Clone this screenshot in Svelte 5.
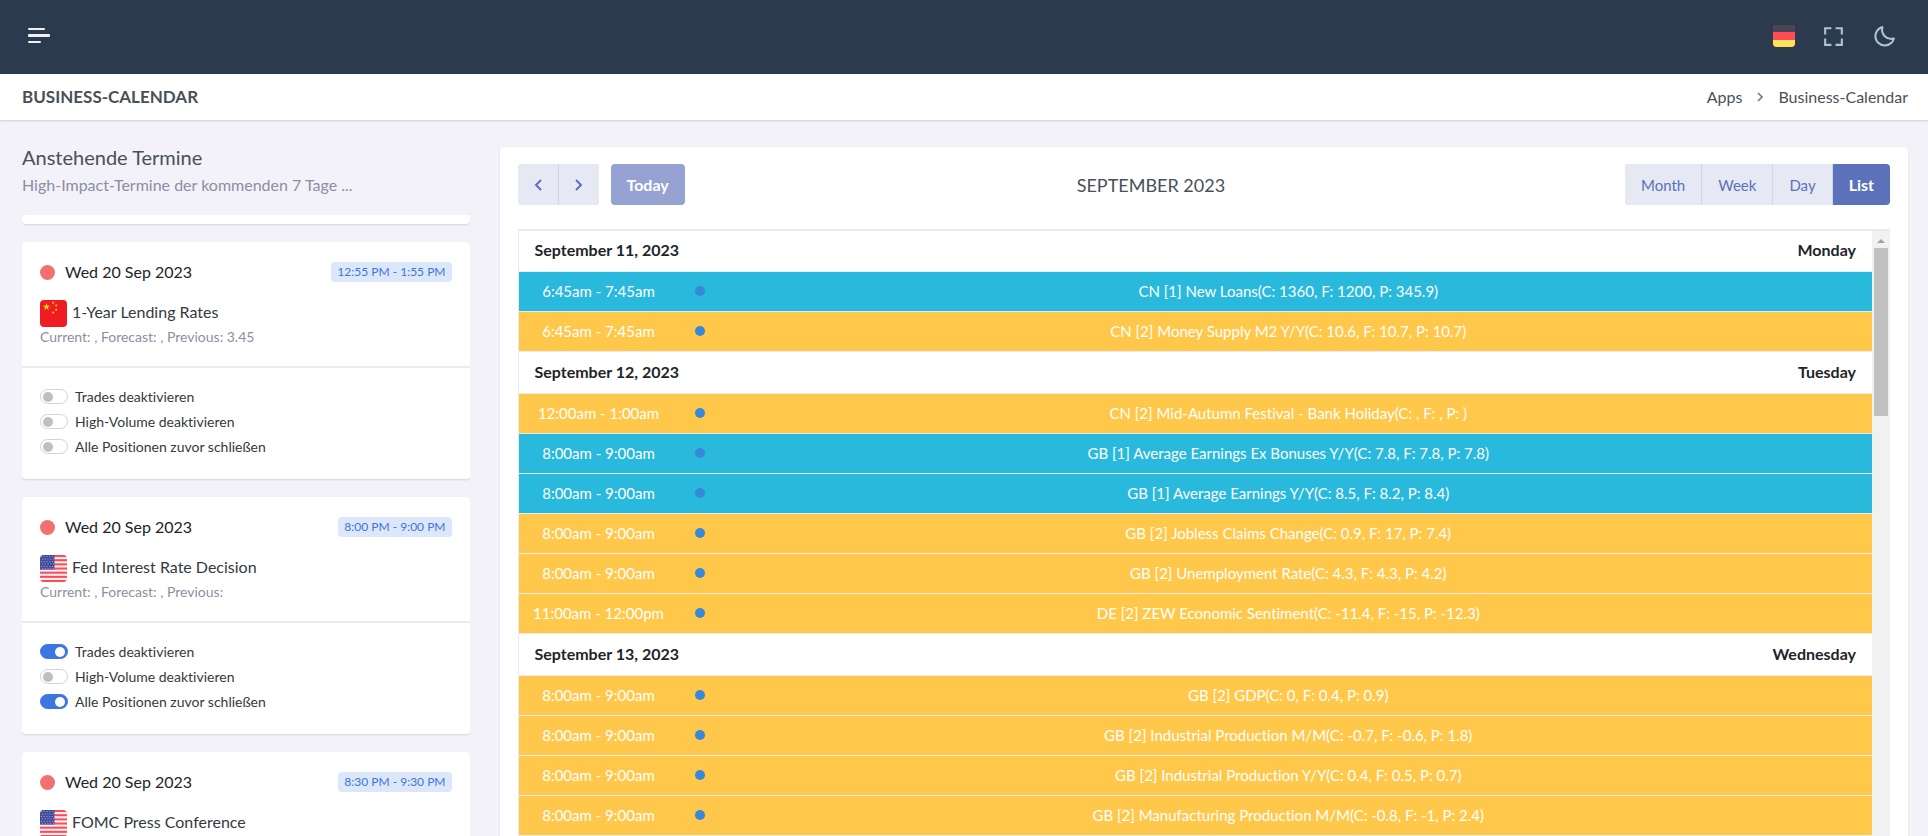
<script lang="ts">
	interface Option {
		label: string;
		checked: boolean;
	}

	interface Appointment {
		date: string;
		time: string;
		country: 'cn' | 'us';
		title: string;
		values: string;
		options: Option[];
	}

	function options(trades: boolean, volume: boolean, positions: boolean): Option[] {
		return [
			{ label: 'Trades deaktivieren', checked: trades },
			{ label: 'High-Volume deaktivieren', checked: volume },
			{ label: 'Alle Positionen zuvor schließen', checked: positions },
		];
	}

	let appointments: Appointment[] = $state([
		{
			date: 'Wed 20 Sep 2023',
			time: '12:55 PM - 1:55 PM',
			country: 'cn',
			title: '1-Year Lending Rates',
			values: 'Current: , Forecast: , Previous: 3.45',
			options: options(false, false, false),
		},
		{
			date: 'Wed 20 Sep 2023',
			time: '8:00 PM - 9:00 PM',
			country: 'us',
			title: 'Fed Interest Rate Decision',
			values: 'Current: , Forecast: , Previous:',
			options: options(true, false, true),
		},
		{
			date: 'Wed 20 Sep 2023',
			time: '8:30 PM - 9:30 PM',
			country: 'us',
			title: 'FOMC Press Conference',
			values: 'Current: , Forecast: , Previous:',
			options: options(true, false, true),
		},
	]);

	const days = [
		{
			date: 'September 11, 2023',
			weekday: 'Monday',
			events: [
				{ time: '6:45am - 7:45am', impact: 1, title: 'CN [1] New Loans(C: 1360, F: 1200, P: 345.9)' },
				{ time: '6:45am - 7:45am', impact: 2, title: 'CN [2] Money Supply M2 Y/Y(C: 10.6, F: 10.7, P: 10.7)' },
			],
		},
		{
			date: 'September 12, 2023',
			weekday: 'Tuesday',
			events: [
				{ time: '12:00am - 1:00am', impact: 2, title: 'CN [2] Mid-Autumn Festival - Bank Holiday(C: , F: , P: )' },
				{ time: '8:00am - 9:00am', impact: 1, title: 'GB [1] Average Earnings Ex Bonuses Y/Y(C: 7.8, F: 7.8, P: 7.8)' },
				{ time: '8:00am - 9:00am', impact: 1, title: 'GB [1] Average Earnings Y/Y(C: 8.5, F: 8.2, P: 8.4)' },
				{ time: '8:00am - 9:00am', impact: 2, title: 'GB [2] Jobless Claims Change(C: 0.9, F: 17, P: 7.4)' },
				{ time: '8:00am - 9:00am', impact: 2, title: 'GB [2] Unemployment Rate(C: 4.3, F: 4.3, P: 4.2)' },
				{ time: '11:00am - 12:00pm', impact: 2, title: 'DE [2] ZEW Economic Sentiment(C: -11.4, F: -15, P: -12.3)' },
			],
		},
		{
			date: 'September 13, 2023',
			weekday: 'Wednesday',
			events: [
				{ time: '8:00am - 9:00am', impact: 2, title: 'GB [2] GDP(C: 0, F: 0.4, P: 0.9)' },
				{ time: '8:00am - 9:00am', impact: 2, title: 'GB [2] Industrial Production M/M(C: -0.7, F: -0.6, P: 1.8)' },
				{ time: '8:00am - 9:00am', impact: 2, title: 'GB [2] Industrial Production Y/Y(C: 0.4, F: 0.5, P: 0.7)' },
				{ time: '8:00am - 9:00am', impact: 2, title: 'GB [2] Manufacturing Production M/M(C: -0.8, F: -1, P: 2.4)' },
			],
		},
	];

	const views = ['Month', 'Week', 'Day', 'List'];
	let view = $state('List');
</script>

{#snippet flag(country: string)}
	<svg class="flag" viewBox="0 0 27 27" aria-hidden="true">
		{#if country === 'cn'}
			<rect width="27" height="27" fill="#f01c24" />
			<path d="M6.5 3.2l.9 2.5h2.7L7.9 7.3l.8 2.6-2.2-1.6-2.2 1.6.8-2.6-2.2-1.6h2.7z" fill="#ffe600" />
			<g fill="#ffd500">
				<circle cx="13.2" cy="2.8" r="1" />
				<circle cx="16.2" cy="5.5" r="1" />
				<circle cx="16.2" cy="9.8" r="1" />
				<circle cx="13.2" cy="12.6" r="1" />
			</g>
		{:else}
			<rect width="27" height="27" fill="#f8f4f8" />
			{#each [0, 1, 2, 3, 4, 5, 6] as stripe}
				<rect y={stripe * 4.16} width="27" height="2.08" fill="#ff4b55" />
			{/each}
			<rect width="14.5" height="14.5" fill="#414b9e" />
			{#each [1.6, 4, 6.4, 8.8, 11.2, 13.2] as y, row}
				{#each [1.4, 4.2, 7, 9.8, 12.6] as x}
					<circle cx={row % 2 ? x + 1 : x} cy={y} r="0.5" fill="#c9cbe6" />
				{/each}
			{/each}
		{/if}
	</svg>
{/snippet}

<div class="page">
	<header class="topbar">
		<button type="button" class="icon-button" aria-label="Menu">
			<svg width="22" height="16" viewBox="0 0 22 16" fill="#f0f1f4">
				<rect width="17" height="2" rx="1" />
				<rect y="6" width="22" height="3" rx="1" />
				<rect y="13" width="13" height="2" rx="1" />
			</svg>
		</button>
		<div class="topbar-actions">
			<button type="button" class="icon-button" aria-label="Deutsch">
				<svg class="language" width="22" height="22" viewBox="0 0 22 22">
					<rect width="22" height="22" fill="#ff4b55" />
					<rect width="22" height="7" fill="#464655" />
					<rect y="15" width="22" height="7" fill="#ffe15a" />
				</svg>
			</button>
			<button type="button" class="icon-button" aria-label="Fullscreen">
				<svg width="25" height="25" viewBox="0 0 24 24" fill="#adc4dc">
					<path d="M5 5h5V3H3v7h2zm5 14H5v-5H3v7h7zm11-5h-2v5h-5v2h7zm-2-4h2V3h-7v2h5z" />
				</svg>
			</button>
			<button type="button" class="icon-button" aria-label="Dark mode">
				<svg width="25" height="25" viewBox="0 0 24 24" fill="#adc4dc">
					<path d="M20.742 13.045a8.088 8.088 0 0 1-2.077.271c-2.135 0-4.14-.83-5.646-2.336a8.025 8.025 0 0 1-2.064-7.723A1 1 0 0 0 9.73 2.034a10.014 10.014 0 0 0-4.489 2.582c-3.898 3.898-3.898 10.243 0 14.143a9.937 9.937 0 0 0 7.072 2.93 9.93 9.93 0 0 0 7.07-2.929 10.007 10.007 0 0 0 2.583-4.491 1.001 1.001 0 0 0-1.224-1.224zm-2.772 4.301a7.947 7.947 0 0 1-5.656 2.343 7.953 7.953 0 0 1-5.658-2.344c-3.118-3.119-3.118-8.195 0-11.314a7.923 7.923 0 0 1 2.06-1.483 10.027 10.027 0 0 0 2.89 7.848 9.972 9.972 0 0 0 7.848 2.891 8.036 8.036 0 0 1-1.484 2.059z" />
				</svg>
			</button>
		</div>
	</header>

	<div class="title-bar">
		<h1>Business-Calendar</h1>
		<nav class="breadcrumb" aria-label="Breadcrumb">
			<a href="#apps">Apps</a>
			<svg width="6" height="10" viewBox="0 0 6 10" fill="none" stroke="#74788d" stroke-width="1.6">
				<path d="M1 1l4 4-4 4" />
			</svg>
			<span>Business-Calendar</span>
		</nav>
	</div>

	<main class="content">
		<aside class="upcoming">
			<h2>Anstehende Termine</h2>
			<p class="subtitle">High-Impact-Termine der kommenden 7 Tage ...</p>
			<div class="card-scroll">
				<div class="card card-tail"></div>
				{#each appointments as appointment}
					<article class="card">
						<div class="card-body">
							<div class="card-head">
								<span class="impact-dot"></span>
								<span class="date">{appointment.date}</span>
								<span class="badge">{appointment.time}</span>
							</div>
							<h3>{@render flag(appointment.country)}{appointment.title}</h3>
							<p class="values">{appointment.values}</p>
						</div>
						<div class="card-options">
							{#each appointment.options as option}
								<label>
									<input type="checkbox" role="switch" bind:checked={option.checked} />
									{option.label}
								</label>
							{/each}
						</div>
					</article>
				{/each}
			</div>
		</aside>

		<section class="calendar">
			<div class="toolbar">
				<div class="toolbar-start">
					<div class="button-group">
						<button type="button" class="arrow" aria-label="Previous">
							<svg width="8" height="12" viewBox="0 0 8 12"><path d="M7 1L2 6l5 5" /></svg>
						</button>
						<button type="button" class="arrow" aria-label="Next">
							<svg width="8" height="12" viewBox="0 0 8 12"><path d="M1 1l5 5-5 5" /></svg>
						</button>
					</div>
					<button type="button" class="today" disabled>Today</button>
				</div>
				<h2>September 2023</h2>
				<div class="button-group">
					{#each views as name}
						<button type="button" class:active={view === name} onclick={() => (view = name)}>{name}</button>
					{/each}
				</div>
			</div>

			<div class="list">
				<table>
					<colgroup>
						<col class="col-time" />
						<col class="col-dot" />
						<col />
					</colgroup>
					{#each days as day}
						<tbody>
							<tr class="day">
								<th colspan="3">
									<div>
										<span>{day.date}</span>
										<span>{day.weekday}</span>
									</div>
								</th>
							</tr>
							{#each day.events as event}
								<tr class="event" class:low={event.impact === 1}>
									<td>{event.time}</td>
									<td class="dot-cell"><span class="dot"></span></td>
									<td>{event.title}</td>
								</tr>
							{/each}
						</tbody>
					{/each}
				</table>
				<div class="scrollbar" aria-hidden="true">
					<svg width="8" height="4" viewBox="0 0 8 4"><path d="M0 4l4-4 4 4z" fill="#a3a3a3" /></svg>
					<div class="thumb"></div>
				</div>
			</div>
		</section>
	</main>
</div>

<style>
	:global(body) {
		margin: 0;
	}

	.page {
		display: flex;
		flex-direction: column;
		height: 100vh;
		overflow: hidden;
		background: #f3f2f8;
		color: #495057;
		font-family: Lato, 'Open Sans', sans-serif;
		font-size: 15px;
		font-variant-ligatures: none;
		line-height: 24px;
	}

	.page * {
		box-sizing: border-box;
	}

	h1,
	h2,
	h3,
	p {
		margin: 0;
		font-weight: 400;
	}

	button {
		border: 0;
		padding: 0;
		font: inherit;
		cursor: pointer;
	}

	.topbar {
		display: flex;
		flex: none;
		align-items: center;
		justify-content: space-between;
		height: 74px;
		padding: 0 31px 2px 28px;
		background: #2c3a4d;
	}

	.topbar-actions {
		display: flex;
		align-items: center;
		gap: 26px;
	}

	.icon-button {
		display: flex;
		align-items: center;
		justify-content: center;
		background: none;
	}

	.language,
	.flag {
		border-radius: 4px;
	}

	.title-bar {
		display: flex;
		flex: none;
		align-items: center;
		justify-content: space-between;
		height: 46px;
		padding: 0 20px 0 22px;
		background: #fff;
		box-shadow: 0 1px 2px rgba(50, 50, 93, 0.2);
	}

	.title-bar h1 {
		font-size: 17px;
		font-weight: 700;
		text-transform: uppercase;
	}

	.breadcrumb {
		display: flex;
		align-items: center;
		gap: 15px;
		font-size: 16px;
	}

	.breadcrumb a {
		color: inherit;
		text-decoration: none;
	}

	.content {
		display: grid;
		flex: 1;
		grid-template-columns: calc(25% - 24px) minmax(0, 1fr);
		gap: 30px;
		min-height: 0;
		padding: 27px 20px 0 22px;
	}

	.upcoming {
		display: flex;
		flex-direction: column;
		min-height: 0;
	}

	.upcoming h2 {
		margin-bottom: 6px;
		font-size: 20px;
		line-height: 20px;
	}

	.subtitle {
		margin-bottom: 18px;
		color: #8a8fa3;
		font-size: 16px;
	}

	.card-scroll {
		display: flex;
		flex: 1;
		flex-direction: column;
		gap: 18px;
		min-height: 0;
		overflow: hidden;
	}

	.card {
		flex: none;
		border-radius: 4px;
		background: #fff;
		box-shadow: 0 1px 2px rgba(50, 50, 93, 0.15);
	}

	.card-tail {
		height: 9px;
		border-top-left-radius: 0;
		border-top-right-radius: 0;
	}

	.card-body {
		padding: 18px 18px 19px;
		border-bottom: 2px solid #ebebed;
	}

	.card-head {
		display: flex;
		align-items: center;
		margin-bottom: 16px;
	}

	.impact-dot {
		width: 15px;
		height: 15px;
		margin-right: 10px;
		border-radius: 50%;
		background: #f17171;
	}

	.date {
		color: #212529;
		font-size: 16px;
	}

	.badge {
		margin-left: auto;
		padding: 0 6px;
		border-radius: 4px;
		background: #dce7fa;
		color: #3b76e1;
		font-size: 12px;
		line-height: 20px;
	}

	.card h3 {
		display: flex;
		align-items: flex-start;
		gap: 5px;
		color: #343a40;
		font-size: 16px;
	}

	.flag {
		width: 27px;
		height: 27px;
	}

	.values {
		color: #8a8fa3;
		font-size: 14px;
		line-height: 20px;
	}

	.card-options {
		padding: 16px 18px 20px;
	}

	.card-options label {
		display: flex;
		align-items: center;
		gap: 7px;
		height: 25px;
		color: #343a40;
		font-size: 14px;
	}

	.card-options input {
		display: flex;
		align-items: center;
		appearance: none;
		width: 28px;
		height: 15px;
		margin: 0;
		border: 1px solid #ced4da;
		border-radius: 8px;
		padding: 0 2px;
		background: #fff;
	}

	.card-options input::before {
		content: '';
		width: 10px;
		height: 10px;
		border-radius: 50%;
		background: #bfbfbf;
	}

	.card-options input:checked {
		justify-content: flex-end;
		border-color: #3b76e1;
		background: #3b76e1;
	}

	.card-options input:checked::before {
		background: #fff;
	}

	.calendar {
		min-height: 0;
		padding: 17px 18px 0;
		border-radius: 4px 4px 0 0;
		background: #fff;
		box-shadow: 0 1px 2px rgba(50, 50, 93, 0.15);
	}

	.toolbar {
		display: flex;
		align-items: center;
		justify-content: space-between;
		margin-bottom: 24px;
	}

	.toolbar h2 {
		margin-right: 8px;
		font-size: 18px;
		text-transform: uppercase;
	}

	.toolbar-start {
		display: flex;
		gap: 12px;
	}

	.button-group {
		display: flex;
		gap: 1px;
		overflow: hidden;
		border-radius: 4px;
		background: #d0d5ea;
	}

	.toolbar button {
		height: 41px;
		padding: 0 16px;
		background: #e6e8f4;
		color: #5b71b9;
		font-size: 15px;
	}

	.toolbar .arrow {
		width: 40px;
	}

	.arrow path {
		fill: none;
		stroke: #5b71b9;
		stroke-width: 2;
	}

	.toolbar .active {
		background: #5b71b9;
		color: #fff;
		font-size: 16px;
		font-weight: 700;
	}

	.toolbar .today {
		border-radius: 4px;
		background: #96a2d2;
		color: #fff;
		font-size: 16px;
		font-weight: 700;
	}

	.list {
		display: flex;
		border-top: 2px solid #ebebed;
		border-left: 1px solid #ebebed;
	}

	table {
		flex: 1;
		table-layout: fixed;
		border-spacing: 0;
	}

	.col-time {
		width: 160px;
	}

	.col-dot {
		width: 26px;
	}

	th,
	td {
		padding: 0 0 2px;
		border-bottom: 1px solid #ebebed;
		text-align: center;
	}

	.day th {
		height: 42px;
		padding: 0 16px 2px;
		color: #212529;
		font-size: 16px;
		font-weight: 700;
	}

	tbody:first-of-type th {
		height: 41px;
	}

	.day div {
		display: flex;
		justify-content: space-between;
	}

	.event td {
		height: 40px;
		background: #ffc84b;
		color: #fff;
	}

	.event.low td {
		background: #29b9dc;
	}

	.event .dot-cell {
		padding-left: 16px;
	}

	.dot {
		display: block;
		width: 10px;
		height: 10px;
		border-radius: 50%;
		background: #3788d8;
	}

	.scrollbar {
		display: flex;
		flex-direction: column;
		align-items: center;
		gap: 5px;
		width: 18px;
		padding-top: 8px;
		background: #f1f1f1;
	}

	.thumb {
		width: 14px;
		height: 168px;
		background: #c1c1c1;
	}
</style>
